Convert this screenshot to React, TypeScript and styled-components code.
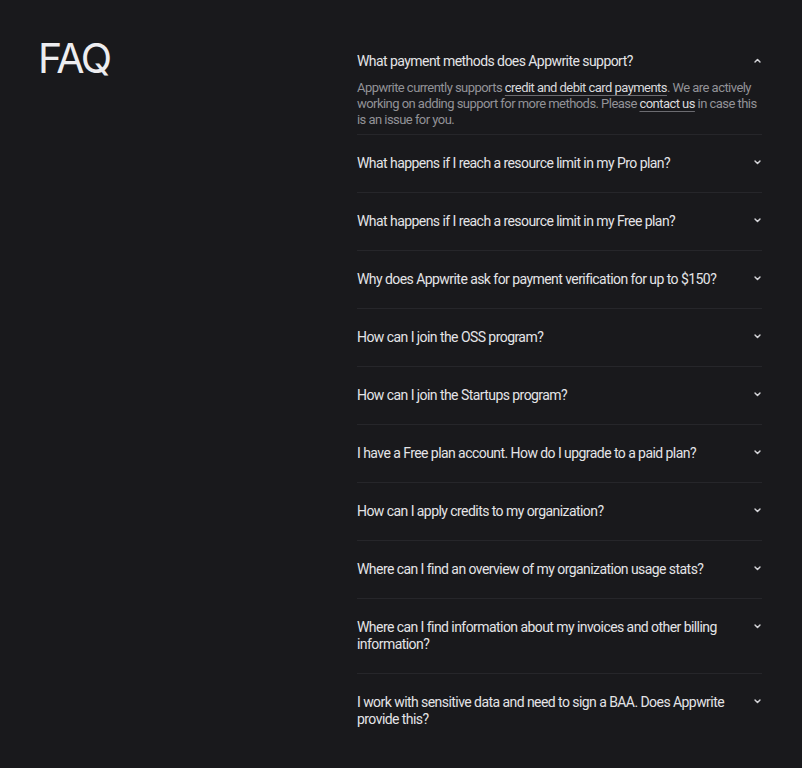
import React, { useState } from "react";
import styled, { createGlobalStyle } from "styled-components";

const Global = createGlobalStyle`
  html, body { margin: 0; padding: 0; background: #19191c; }
  body { font-family: Roboto, "Noto Sans", sans-serif; -webkit-font-smoothing: antialiased; }
  * { box-sizing: border-box; }
`;

const Page = styled.main`
  display: grid;
  grid-template-columns: 319px 405px;
  padding: 34px 0 40px 38px;
  min-height: 768px;
`;

const Heading = styled.h2`
  margin: 2px 0 0;
  font-family: Inter, sans-serif;
  font-size: 41px;
  line-height: 44px;
  font-weight: 400;
  letter-spacing: -0.055em;
  color: #ededf0;
`;

const List = styled.ul`
  list-style: none;
  margin: 0;
  padding: 0;
`;

const Item = styled.li`
  border-bottom: 1px solid #26262a;
  &:last-child { border-bottom: none; }
`;

const Question = styled.button<{ $open: boolean }>`
  all: unset;
  display: flex;
  width: 100%;
  justify-content: space-between;
  align-items: flex-start;
  gap: 24px;
  padding: ${(p) => (p.$open ? "19px 0 10px" : "20px 0 20px")};
  cursor: pointer;
  font-family: Roboto, sans-serif;
  font-size: 14px;
  line-height: 17px;
  letter-spacing: -0.04em;
  color: #e4e4e7;
`;

const QText = styled.span`
  flex: 1;
`;

const Chevron = styled.svg<{ $open: boolean }>`
  flex: none;
  width: 7px;
  height: 5px;
  margin: 5px 1px 0 0;
  transform: ${(p) => (p.$open ? "rotate(180deg)" : "none")};
`;

const Answer = styled.p`
  margin: 0;
  padding: 0 0 6px;
  font-family: Roboto, sans-serif;
  font-size: 13px;
  line-height: 16px;
  letter-spacing: -0.042em;
  color: #929297;
`;

const Link = styled.a`
  color: #dadadd;
  text-decoration: underline;
  text-decoration-color: #6b6b70;
  text-underline-offset: 3px;
`;

const questions = [
  "What payment methods does Appwrite support?",
  "What happens if I reach a resource limit in my Pro plan?",
  "What happens if I reach a resource limit in my Free plan?",
  "Why does Appwrite ask for payment verification for up to $150?",
  "How can I join the OSS program?",
  "How can I join the Startups program?",
  "I have a Free plan account. How do I upgrade to a paid plan?",
  "How can I apply credits to my organization?",
  "Where can I find an overview of my organization usage stats?",
  "Where can I find information about my invoices and other billing information?",
  "I work with sensitive data and need to sign a BAA. Does Appwrite provide this?",
];

export default function App() {
  const [open, setOpen] = useState(0);
  return (
    <>
      <Global />
      <Page>
        <Heading>FAQ</Heading>
        <List>
          {questions.map((q, i) => (
            <Item key={q}>
              <Question $open={open === i} onClick={() => setOpen(open === i ? -1 : i)}>
                <QText>{q}</QText>
                <Chevron $open={open === i} viewBox="0 0 7 5" fill="none">
                  <path d="M1 1 L3.5 3.6 L6 1" stroke="#d4d4d8" strokeWidth="1.4" strokeLinecap="round" strokeLinejoin="round" />
                </Chevron>
              </Question>
              {open === i && i === 0 && (
                <Answer>
                  Appwrite currently supports <Link href="#">credit and debit card payments</Link>. We are actively
                  working on adding support for more methods. Please <Link href="#">contact us</Link> in case this
                  is an issue for you.
                </Answer>
              )}
            </Item>
          ))}
        </List>
      </Page>
    </>
  );
}
